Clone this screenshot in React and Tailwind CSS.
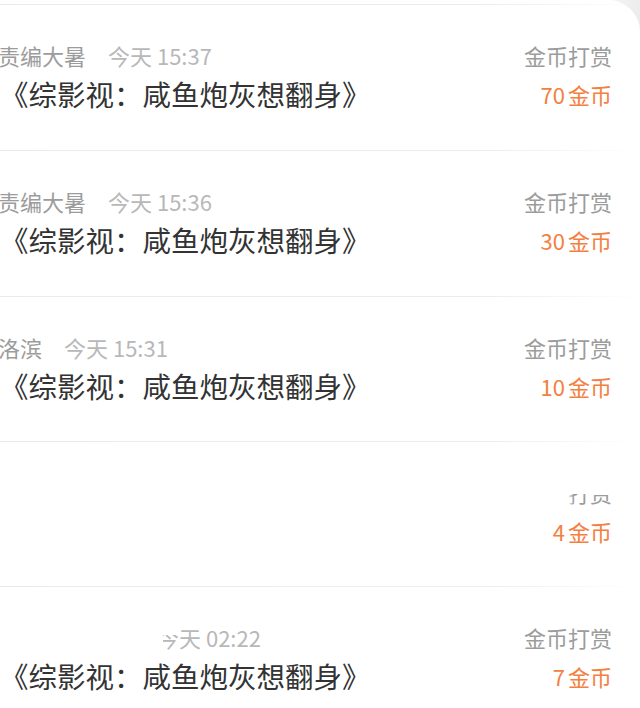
import React from "react";

const rows = [
  { name: "责编大暑", time: "今天 15:37", amount: "70", h: "h-[145px]" },
  { name: "责编大暑", time: "今天 15:36", amount: "30", h: "h-[145px]" },
  { name: "洛滨", time: "今天 15:31", amount: "10", h: "h-[144px]" },
  { hidden: true, amount: "4", h: "h-[144px]" },
  { erased: true, time: "今天 02:22", amount: "7", h: "h-[140px]" },
];

function Divider() {
  return <div className="h-px bg-linear-to-r from-[#eaeaea] via-[#ececec] via-75% to-transparent" />;
}

function Meta({ row }) {
  if (row.hidden) return <div className="h-[30px]" />;
  if (row.erased) {
    return (
      <div className="flex items-center h-[30px] text-[22px] leading-[30px]">
        <span className="w-[157px] shrink-0" />
        <span className="text-[#b8b8b8]">
          <span className="relative">
            今
            <span className="absolute left-0 top-0 w-full h-[14px] bg-white" />
            <span className="absolute left-0 top-0 w-[6px] h-full bg-white" />
          </span>
          {row.time.slice(1)}
        </span>
      </div>
    );
  }
  return (
    <div className="flex items-center gap-[22px] h-[30px] text-[22px] leading-[30px] -ml-[2px]">
      <span className="text-[#9c9c9c]">{row.name}</span>
      <span className="text-[#b8b8b8]">{row.time}</span>
    </div>
  );
}

function Label({ row }) {
  if (row.hidden) {
    return (
      <span className="relative text-[#9c9c9c]">
        金币打赏
        <span className="absolute left-0 top-0 w-full h-[18px] bg-white" />
        <span className="absolute left-0 top-0 w-[50px] h-full bg-linear-to-r from-white from-85% to-white/0" />
      </span>
    );
  }
  return <span className="text-[#9c9c9c]">金币打赏</span>;
}

function Row({ row }) {
  return (
    <div className={`${row.h} flex justify-between pr-[28px] pt-[35px]`}>
      <div className="flex flex-col gap-[6px]">
        <Meta row={row} />
        {!row.hidden && (
          <div className="h-[36px] text-[28.5px] leading-[36px] text-[#333333] whitespace-nowrap">
            《综影视：咸鱼炮灰想翻身》
          </div>
        )}
      </div>
      <div className="flex flex-col items-end gap-[6px]">
        <div className="h-[30px] text-[22px] leading-[30px]">
          <Label row={row} />
        </div>
        <div className="h-[36px] text-[22px] leading-[36px] text-[#f4803f]">
          {row.amount}
          <span className="ml-[3px]">金币</span>
        </div>
      </div>
    </div>
  );
}

export default function App() {
  return (
    <div
      className="w-[640px] h-[708px] overflow-hidden bg-white"
      style={{ fontFamily: '"Noto Sans CJK SC", "Noto Sans", sans-serif' }}
    >
      <div className="bg-linear-to-r from-white from-90% to-[#ececec]">
        <div className="bg-white rounded-tr-[32px] pt-[4px]">
          {rows.map((row, i) => (
            <div key={i}>
              <Divider />
              <Row row={row} />
            </div>
          ))}
        </div>
      </div>
    </div>
  );
}
